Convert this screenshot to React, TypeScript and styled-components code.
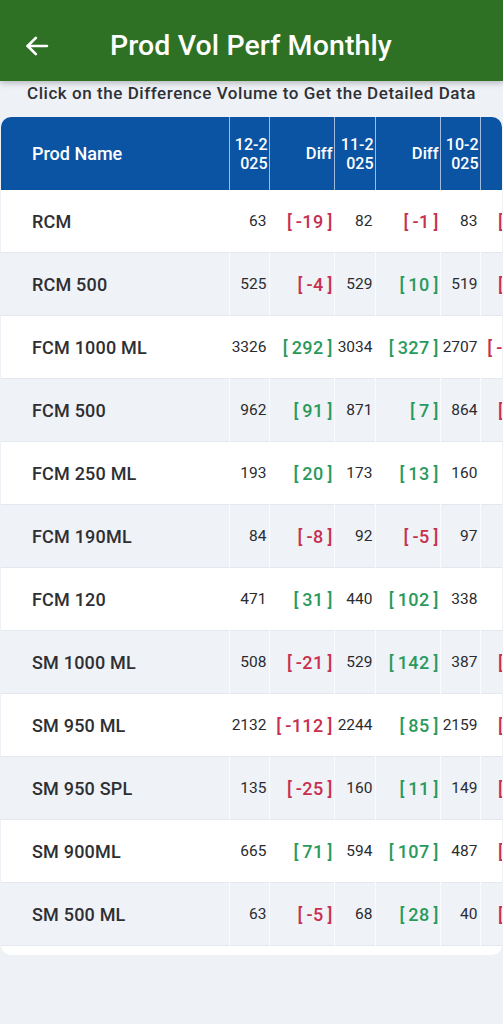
import React from 'react'
import styled, { createGlobalStyle } from 'styled-components'

type Row = {
  name: string
  values: [number, number, number]
  diffs: [number, number, number]
}

const months = ['12-2025', '11-2025', '10-2025']
const dateWidths = [40, 41, 40]

const rows: Row[] = [
  { name: 'RCM', values: [63, 82, 83], diffs: [-19, -1, -15] },
  { name: 'RCM 500', values: [525, 529, 519], diffs: [-4, 10, -20] },
  { name: 'FCM 1000 ML', values: [3326, 3034, 2707], diffs: [292, 327, -245] },
  { name: 'FCM 500', values: [962, 871, 864], diffs: [91, 7, -33] },
  { name: 'FCM 250 ML', values: [193, 173, 160], diffs: [20, 13, 8] },
  { name: 'FCM 190ML', values: [84, 92, 97], diffs: [-8, -5, 4] },
  { name: 'FCM 120', values: [471, 440, 338], diffs: [31, 102, 9] },
  { name: 'SM 1000 ML', values: [508, 529, 387], diffs: [-21, 142, -41] },
  { name: 'SM 950 ML', values: [2132, 2244, 2159], diffs: [-112, 85, -86] },
  { name: 'SM 950 SPL', values: [135, 160, 149], diffs: [-25, 11, -12] },
  { name: 'SM 900ML', values: [665, 594, 487], diffs: [71, 107, -30] },
  { name: 'SM 500 ML', values: [63, 68, 40], diffs: [-5, 28, -10] },
]

const GlobalStyle = createGlobalStyle`
  body {
    margin: 0;
    background: #eef1f6;
    font-family: Roboto, "Noto Sans", "Liberation Sans", sans-serif;
  }
`

const Page = styled.div`
  display: flex;
  flex-direction: column;
  min-height: 1024px;
  background: #eef1f6;
`

const AppBar = styled.header`
  height: 81px;
  background: #2e7124;
  display: flex;
  align-items: center;
  padding: 10px 0 0 22px;
  box-sizing: border-box;
  gap: 58px;
  box-shadow: 0 2px 6px rgba(0, 0, 0, 0.25);
  position: relative;
  z-index: 1;
`

const BackButton = styled.button`
  border: 0;
  background: none;
  padding: 0;
  width: 30px;
  height: 30px;
  display: flex;
  align-items: center;
  justify-content: center;
  color: #fff;
`

const Title = styled.h1`
  margin: 0;
  color: #fff;
  font-size: 28.5px;
  font-weight: 500;
  letter-spacing: 0.1px;
`

const Hint = styled.p`
  margin: 2px 0 0;
  text-align: center;
  color: #2f3136;
  font-size: 17px;
  font-weight: 500;
  letter-spacing: 0.55px;
  line-height: 20px;
`

const Card = styled.div`
  margin: 14px 1px 0;
  background: #fff;
  border-radius: 10px;
  overflow: hidden;
  padding-bottom: 9px;
`

const Table = styled.table`
  border-collapse: collapse;
  table-layout: fixed;
  width: 544px;
`

const HeadCell = styled.th<{ $w: number; $left?: boolean }>`
  width: ${(p) => p.$w}px;
  height: 73px;
  background: #0b54a3;
  color: #fff;
  font-weight: 500;
  font-size: ${(p) => (p.$left ? 18 : 16.5)}px;
  text-align: ${(p) => (p.$left ? 'left' : 'right')};
  padding: ${(p) => (p.$left ? '0 0 0 31px' : '0 1px 0 0')};
  border-right: 1.5px solid #9fbbe0;
  box-sizing: border-box;
  vertical-align: middle;

  &:last-child {
    border-right: 0;
  }
`

const DateLabel = styled.span`
  display: inline-block;
  width: 34px;
  word-break: break-all;
  line-height: 19px;
  font-size: 16px;
`

const BodyRow = styled.tr<{ $alt: boolean }>`
  background: ${(p) => (p.$alt ? '#eff2f7' : '#fff')};
  border-bottom: 1px solid #e4e7ed;
`

const NameCell = styled.td`
  height: 62px;
  padding: 0 0 0 31px;
  font-size: 18px;
  font-weight: 500;
  letter-spacing: 0.2px;
  color: #2e2f33;
  border-right: 1px solid rgba(255, 255, 255, 0.7);
`

const NumCell = styled.td`
  text-align: right;
  padding: 0 2px 0 0;
  font-size: 15.5px;
  color: #2a2b2f;
  border-right: 1px solid rgba(255, 255, 255, 0.7);
  white-space: nowrap;
`

const DiffCell = styled.td`
  text-align: right;
  padding: 0 1px 0 0;
  border-right: 1px solid rgba(255, 255, 255, 0.7);
  white-space: nowrap;
`

const Diff = styled.span<{ $up: boolean }>`
  font-size: 18px;
  font-weight: 500;
  color: ${(p) => (p.$up ? '#2a9a5c' : '#c8304f')};
  cursor: pointer;
`

const DiffValue = styled.span`
  padding: 0 4px;
  letter-spacing: 0.4px;
`

const ArrowIcon = () => (
  <svg width="28" height="28" viewBox="0 0 24 24" fill="none" stroke="currentColor" strokeWidth="2.3" strokeLinecap="round" strokeLinejoin="round">
    <path d="M20.5 12H4" />
    <path d="M11 5l-7 7 7 7" />
  </svg>
)

export default function App() {
  return (
    <Page>
      <GlobalStyle />
      <AppBar>
        <BackButton aria-label="back">
          <ArrowIcon />
        </BackButton>
        <Title>Prod Vol Perf Monthly</Title>
      </AppBar>
      <Hint>Click on the Difference Volume to Get the Detailed Data</Hint>
      <Card>
        <Table>
          <thead>
            <tr>
              <HeadCell $w={228} $left>
                Prod Name
              </HeadCell>
              {months.map((m, i) => (
                <React.Fragment key={m}>
                  <HeadCell $w={dateWidths[i]}>
                    <DateLabel>{m}</DateLabel>
                  </HeadCell>
                  <HeadCell $w={65}>Diff</HeadCell>
                </React.Fragment>
              ))}
            </tr>
          </thead>
          <tbody>
            {rows.map((r, i) => (
              <BodyRow key={r.name} $alt={i % 2 === 1}>
                <NameCell>{r.name}</NameCell>
                {r.values.map((v, j) => (
                  <React.Fragment key={j}>
                    <NumCell>{v}</NumCell>
                    <DiffCell>
                      <Diff $up={r.diffs[j] >= 0}>
                        [<DiffValue>{r.diffs[j]}</DiffValue>]
                      </Diff>
                    </DiffCell>
                  </React.Fragment>
                ))}
              </BodyRow>
            ))}
          </tbody>
        </Table>
      </Card>
    </Page>
  )
}
